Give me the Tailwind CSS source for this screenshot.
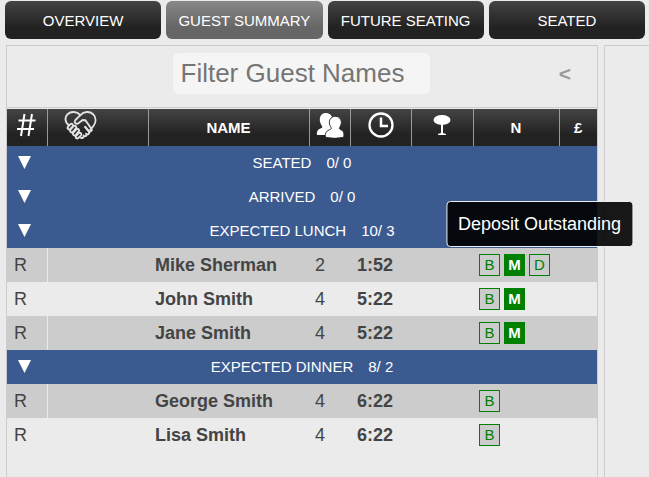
<!DOCTYPE html>
<html lang="en">
  <head>
    <meta charset="UTF-8" />
    <meta name="viewport" content="width=device-width, initial-scale=1.0" />
    <title>Guest Summary</title>
    <script src="https://cdn.jsdelivr.net/npm/@tailwindcss/browser@4"></script>
  </head>
  <body class="flex flex-col min-h-screen bg-[#ebebeb] font-['Liberation_Sans',Arial,sans-serif] text-[#444]">
    <nav class="flex gap-[5px] pl-[5px] pr-1 pt-px text-[15px] text-white">
      <button type="button" class="flex-1 h-[38px] pt-0.5 rounded-md whitespace-nowrap bg-linear-to-b from-[#444] to-[#222] to-70%">OVERVIEW</button>
      <button type="button" class="flex-1 h-[38px] pt-0.5 rounded-md whitespace-nowrap bg-linear-to-b from-[#888] to-[#666] to-70%">GUEST SUMMARY</button>
      <button type="button" class="flex-1 h-[38px] pt-0.5 rounded-md whitespace-nowrap bg-linear-to-b from-[#444] to-[#222] to-70%">FUTURE SEATING</button>
      <button type="button" class="flex-1 h-[38px] pt-0.5 rounded-md whitespace-nowrap bg-linear-to-b from-[#444] to-[#222] to-70%">SEATED</button>
    </nav>

    <div class="flex flex-1 gap-1.5 pt-1.5 pl-1.5">
      <main class="flex-1 border border-b-0 border-[#ccc]">
        <!-- Filter -->
        <div class="grid grid-cols-[1fr_257px_1fr] items-start h-[62px] pt-[7px] pr-0.5 mb-px border-b border-[#ccc]">
          <input
            type="text"
            aria-label="Filter Guest Names"
            placeholder="Filter Guest Names"
            class="col-start-2 w-full h-[41px] px-2 rounded-md bg-[#f5f5f5] text-[26px] placeholder:text-[#757575]"
          />
          <button type="button" aria-label="Collapse" class="justify-self-end h-[41px] mr-6 text-[21px] font-bold text-[#999]">&lt;</button>
        </div>

        <!-- Guest list -->
        <table class="w-full table-fixed">
          <colgroup>
            <col class="w-10" />
            <col class="w-[101px]" />
            <col />
            <col class="w-[41px]" />
            <col class="w-[61px]" />
            <col class="w-[62px]" />
            <col class="w-[86px]" />
            <col class="w-[38px]" />
          </colgroup>
          <thead class="text-[15px] text-white bg-linear-to-b from-[#444] to-[#222] to-70%">
            <tr class="h-[37px]">
              <th class="p-0 pb-1.5 border-r border-[#999]">
                <svg role="img" aria-label="Number" class="w-[19px] h-6 mx-auto" viewBox="0 0 19 24" fill="none" stroke="#fff" stroke-width="2">
                  <path d="M7.500 1 4 23M15 1 11.500 23M1.500 7.500h17M0 16h17" />
                </svg>
              </th>
              <th class="p-0 pb-1 pl-4 border-r border-[#999]">
                <svg role="img" aria-label="Regular" class="w-[33px] h-[30px]" viewBox="0 0 103 94" fill="none" stroke="#e2e2e2" stroke-width="6" stroke-linecap="round" stroke-linejoin="round">
                  <path d="M14 45C3 36 1 20 11 10c11-10 29-9 40 3C62 1 80 0 91 10c11 11 9 26 1 37L82 59" />
                  <path d="M51 13 35 29c-5 6 2 14 9 10l14-11 9 1 18 26c5 7-3 12-8 7L66 50" />
                  <path d="M66 50l11 14c5 7-3 12-8 7M69 71c4 7-3 11-8 6M61 77c2 6-4 9-8 7" />
                  <path d="M13 49l6-7c5-5 12 1 8 6l-7 8c-5 5-12-1-7-7zM20 58l9-10c5-5 12 1 8 6L28 65c-5 5-12-1-8-7zM29 68l9-10c5-5 12 1 8 6L37 75c-5 5-12-1-8-7zM38 78l7-8c5-5 12 1 8 6l-6 7c-5 6-14 1-9-5z" />
                </svg>
              </th>
              <th class="p-0 pt-0.5 border-r border-[#999]">NAME</th>
              <th class="p-0 pb-1.5 border-r border-[#999]">
                <svg role="img" aria-label="Covers" class="w-7 h-[26px] mx-auto" viewBox="0 0 84 78" fill="#fff">
                  <path d="M3 69C1 57 6 52 17 48c3-2 2-5-1-9C6 22 13 3 29 3c12 0 19 7 20 17l-2 9c2 20-2 32-12 40z" />
                  <path d="M29 76c-4-14 4-20 15-24 3-2 2-5-1-9-8-16 1-30 15-30s23 14 15 30c-3 4-4 7-1 9 11 4 13 12 11 24q-27 6-54 0z" stroke="#333" stroke-width="3" />
                </svg>
              </th>
              <th class="p-0 pb-1.5 border-r border-[#999]">
                <svg role="img" aria-label="Time" class="w-[26px] h-[26px] mx-auto" viewBox="0 0 26 26" fill="none" stroke="#fff">
                  <circle cx="13" cy="13" r="11.500" stroke-width="2.300" />
                  <path d="M13 5.500V14h7" stroke-width="2.500" />
                </svg>
              </th>
              <th class="p-0 pb-1.5 border-r border-[#999]">
                <svg role="img" aria-label="Table" class="w-[18px] h-[22px] mx-auto" viewBox="0 0 18 22" fill="#fff">
                  <ellipse cx="9" cy="6" rx="8.500" ry="5" />
                  <path d="M8 10h2v9l3 1v1H5v-1l3-1z" />
                </svg>
              </th>
              <th class="p-0 pt-0.5 border-r border-[#999]">N</th>
              <th class="p-0 pt-0.5">£</th>
            </tr>
          </thead>
          <tbody class="text-lg">
            <tr class="h-[34px] bg-[#3b5a8f] text-[15px] text-white">
              <td colspan="8" class="p-0">
                <div class="grid grid-cols-[34px_1fr_34px] items-center">
                  <button type="button" aria-label="Toggle seated" class="justify-self-center">
                    <svg class="w-[13px] h-[13px]" viewBox="0 0 13 13" fill="#fff"><path d="M0 0h13L6.500 13z" /></svg>
                  </button>
                  <div class="flex justify-center gap-[15px]"><span>SEATED</span><span>0/ 0</span></div>
                </div>
              </td>
            </tr>
            <tr class="h-[34px] bg-[#3b5a8f] text-[15px] text-white">
              <td colspan="8" class="p-0">
                <div class="grid grid-cols-[34px_1fr_34px] items-center">
                  <button type="button" aria-label="Toggle arrived" class="justify-self-center">
                    <svg class="w-[13px] h-[13px]" viewBox="0 0 13 13" fill="#fff"><path d="M0 0h13L6.500 13z" /></svg>
                  </button>
                  <div class="flex justify-center gap-[15px]"><span>ARRIVED</span><span>0/ 0</span></div>
                </div>
              </td>
            </tr>
            <tr class="h-[34px] bg-[#3b5a8f] text-[15px] text-white">
              <td colspan="8" class="p-0">
                <div class="grid grid-cols-[34px_1fr_34px] items-center">
                  <button type="button" aria-label="Toggle expected lunch" class="justify-self-center">
                    <svg class="w-[13px] h-[13px]" viewBox="0 0 13 13" fill="#fff"><path d="M0 0h13L6.500 13z" /></svg>
                  </button>
                  <div class="flex justify-center gap-[15px]"><span>EXPECTED LUNCH</span><span>10/ 3</span></div>
                </div>
              </td>
            </tr>
            <tr class="h-[34px] bg-[#ccc]">
              <td class="p-0 pl-[7px] border-r border-[#ebebeb]">R</td>
              <td></td>
              <td class="p-0 pl-[7px] font-bold">Mike Sherman</td>
              <td class="p-0 pl-1.5">2</td>
              <td class="p-0 pl-[7px] font-bold">1:52</td>
              <td></td>
              <td colspan="2" class="p-0 pl-1.5">
                <div class="flex gap-1 text-[15px] leading-5 text-center text-[#008000]">
                  <span class="w-[21px] border border-[#008000] bg-[#ccc]">B</span>
                  <span class="w-[21px] border border-[#008000] bg-[#008000] font-bold text-white">M</span>
                  <span class="relative w-[21px] border border-[#008000] bg-[#ccc]" aria-describedby="deposit-tip">
                    D
                    <span id="deposit-tip" role="tooltip" class="absolute bottom-full left-1/2 -translate-x-1/2 mb-2 px-[11px] py-2 border border-[#eee] rounded bg-black/90 text-lg leading-7 text-white whitespace-nowrap">Deposit Outstanding</span>
                  </span>
                </div>
              </td>
            </tr>
            <tr class="h-[34px]">
              <td class="p-0 pl-[7px] border-r border-[#ebebeb]">R</td>
              <td></td>
              <td class="p-0 pl-[7px] font-bold">John Smith</td>
              <td class="p-0 pl-1.5">4</td>
              <td class="p-0 pl-[7px] font-bold">5:22</td>
              <td></td>
              <td colspan="2" class="p-0 pl-1.5">
                <div class="flex gap-1 text-[15px] leading-5 text-center text-[#008000]">
                  <span class="w-[21px] border border-[#008000] bg-[#ccc]">B</span>
                  <span class="w-[21px] border border-[#008000] bg-[#008000] font-bold text-white">M</span>
                </div>
              </td>
            </tr>
            <tr class="h-[34px] bg-[#ccc]">
              <td class="p-0 pl-[7px] border-r border-[#ebebeb]">R</td>
              <td></td>
              <td class="p-0 pl-[7px] font-bold">Jane Smith</td>
              <td class="p-0 pl-1.5">4</td>
              <td class="p-0 pl-[7px] font-bold">5:22</td>
              <td></td>
              <td colspan="2" class="p-0 pl-1.5">
                <div class="flex gap-1 text-[15px] leading-5 text-center text-[#008000]">
                  <span class="w-[21px] border border-[#008000] bg-[#ccc]">B</span>
                  <span class="w-[21px] border border-[#008000] bg-[#008000] font-bold text-white">M</span>
                </div>
              </td>
            </tr>
            <tr class="h-[34px] bg-[#3b5a8f] text-[15px] text-white">
              <td colspan="8" class="p-0">
                <div class="grid grid-cols-[34px_1fr_34px] items-center">
                  <button type="button" aria-label="Toggle expected dinner" class="justify-self-center">
                    <svg class="w-[13px] h-[13px]" viewBox="0 0 13 13" fill="#fff"><path d="M0 0h13L6.500 13z" /></svg>
                  </button>
                  <div class="flex justify-center gap-[15px]"><span>EXPECTED DINNER</span><span>8/ 2</span></div>
                </div>
              </td>
            </tr>
            <tr class="h-[34px] bg-[#ccc]">
              <td class="p-0 pl-[7px] border-r border-[#ebebeb]">R</td>
              <td></td>
              <td class="p-0 pl-[7px] font-bold">George Smith</td>
              <td class="p-0 pl-1.5">4</td>
              <td class="p-0 pl-[7px] font-bold">6:22</td>
              <td></td>
              <td colspan="2" class="p-0 pl-1.5">
                <div class="flex text-[15px] leading-5 text-center text-[#008000]">
                  <span class="w-[21px] border border-[#008000] bg-[#ccc]">B</span>
                </div>
              </td>
            </tr>
            <tr class="h-[34px]">
              <td class="p-0 pl-[7px] border-r border-[#ebebeb]">R</td>
              <td></td>
              <td class="p-0 pl-[7px] font-bold">Lisa Smith</td>
              <td class="p-0 pl-1.5">4</td>
              <td class="p-0 pl-[7px] font-bold">6:22</td>
              <td></td>
              <td colspan="2" class="p-0 pl-1.5">
                <div class="flex text-[15px] leading-5 text-center text-[#008000]">
                  <span class="w-[21px] border border-[#008000] bg-[#ccc]">B</span>
                </div>
              </td>
            </tr>
          </tbody>
        </table>
      </main>

      <aside class="w-[45px] border-t border-l border-[#ccc]"></aside>
    </div>
  </body>
</html>
